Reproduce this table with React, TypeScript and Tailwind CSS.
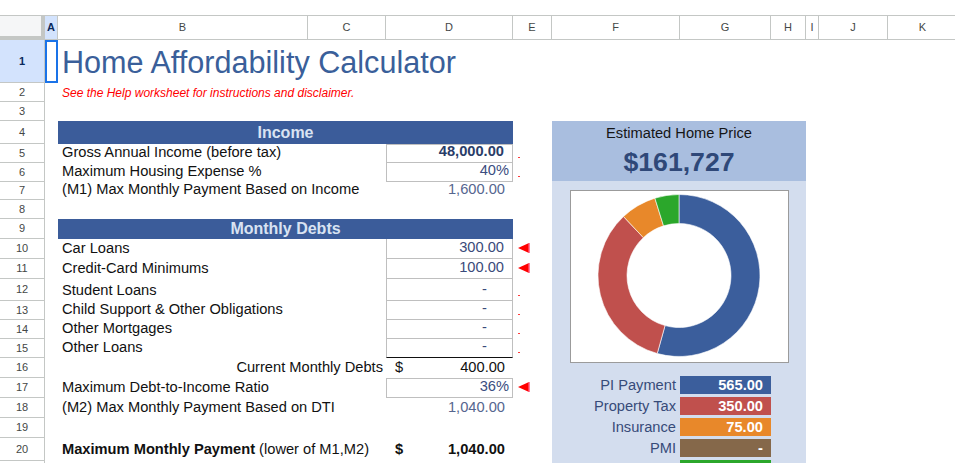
import React from "react";

// Column header cells after the corner: A..K
const COLUMNS = [
  { name: "A", w: "w-[13px]", active: true },
  { name: "B", w: "w-[250px]" },
  { name: "C", w: "w-[78px]" },
  { name: "D", w: "w-[127px]" },
  { name: "E", w: "w-[39px]" },
  { name: "F", w: "w-[128px]" },
  { name: "G", w: "w-[91px]" },
  { name: "H", w: "w-[35px]" },
  { name: "I", w: "w-[13px]" },
  { name: "J", w: "w-[69px]" },
  { name: "K", w: "w-[70px]" },
];

// same heights as grid-rows on the sheet below
const ROW_HEIGHTS = [
  "h-[43px]", "h-[19px]", "h-[19px]", "h-[23px]", "h-[19px]", "h-[19px]", "h-[18px]",
  "h-[19px]", "h-[20px]", "h-[20px]", "h-[20px]", "h-[22px]", "h-[19px]", "h-[19px]",
  "h-[19px]", "h-[20px]", "h-[20px]", "h-[20px]", "h-[20px]", "h-[23px]", "h-[20px]",
];

// the last row (HOA) only peeks in at the bottom edge, so no text is shown for it
const PAYMENT = [
  { label: "PI Payment", value: "565.00", amount: 565, color: "#3b5e9c", bg: "bg-[#3b5e9c]" },
  { label: "Property Tax", value: "350.00", amount: 350, color: "#c0504d", bg: "bg-[#c0504d]" },
  { label: "Insurance", value: "75.00", amount: 75, color: "#e8882a", bg: "bg-[#e8882a]" },
  { label: "PMI", value: "-", amount: 0, color: "#85684a", bg: "bg-[#85684a]" },
  { label: "", value: "", amount: 50, color: "#2ba72b", bg: "bg-[#2ba72b]" },
];

function sector(cx: number, cy: number, r0: number, r1: number, a0: number, a1: number) {
  const pt = (r: number, a: number) => `${cx + r * Math.sin(a)} ${cy - r * Math.cos(a)}`;
  const large = a1 - a0 > Math.PI ? 1 : 0;
  return `M${pt(r1, a0)} A${r1} ${r1} 0 ${large} 1 ${pt(r1, a1)} L${pt(r0, a1)} A${r0} ${r0} 0 ${large} 0 ${pt(r0, a0)} Z`;
}

function Donut() {
  const total = PAYMENT.reduce((s, p) => s + p.amount, 0);
  let start = 0;
  return (
    <svg width="217" height="171" viewBox="0 0 217 171">
      {PAYMENT.filter((p) => p.amount > 0).map((p) => {
        const end = start + (p.amount / total) * Math.PI * 2;
        const d = sector(108, 84.5, 52, 81, start, end);
        start = end;
        return <path key={p.color} d={d} fill={p.color} stroke="#ffffff" strokeWidth="0.6" />;
      })}
    </svg>
  );
}

function Dash() {
  return <span className="block h-[1px] w-[2px] bg-[#ff3b3b]" />;
}

function Marker() {
  return (
    <svg width="12" height="10" viewBox="0 0 12 10">
      <polygon points="0,5 11,0 11,10" fill="#ff0000" />
      <rect x="10.5" y="0" width="1.5" height="10" fill="#ff7aa0" />
    </svg>
  );
}

const label = "flex items-end pb-[3px] pl-[4px] whitespace-nowrap text-[14.67px] leading-none text-[#111]";
const num = "flex items-end justify-end pb-[3px] pr-[8px] text-[14.67px] leading-none";
const money = "flex items-end justify-between pb-[3px] pl-[9px] pr-[8px] text-[14.67px] leading-none text-[#111]";

export default function App() {
  return (
    <div className="h-[463px] w-[955px] overflow-hidden bg-white font-['Liberation_Sans',Arial,sans-serif]">
      <div className="h-[15px]" />

      {/* column headers */}
      <div className="flex h-[25px] text-[11px] text-[#444746]">
        <div className="w-[45px] shrink-0 border-y border-r-[4px] border-b-[4px] border-[#c4c7c5] bg-[#f5f6f7]" />
        {COLUMNS.map((c) => (
          <div
            key={c.name}
            className={`${c.w} flex shrink-0 items-center justify-center border-y border-r border-[#c4c7c5] ${
              c.active ? "bg-[#d3e3fd] font-bold text-[#0b2a5c]" : ""
            }`}
          >
            {c.name}
          </div>
        ))}
      </div>

      <div className="flex">
        {/* row headers */}
        <div className="flex w-[45px] shrink-0 flex-col border-r border-[#c4c7c5] text-[11px] text-[#444746]">
          {ROW_HEIGHTS.map((h, i) => (
            <div
              key={i}
              className={`${h} flex shrink-0 items-center justify-center border-b border-[#c4c7c5] ${
                i === 0 ? "bg-[#d3e3fd] font-bold text-[#0b2a5c]" : ""
              }`}
            >
              {i < 20 ? i + 1 : ""}
            </div>
          ))}
        </div>

        {/* sheet */}
        <div className="grid grid-cols-[13px_250px_78px_127px_39px_128px_91px_35px_13px_69px_70px] grid-rows-[43px_19px_19px_23px_19px_19px_18px_19px_20px_20px_20px_22px_19px_19px_19px_20px_20px_20px_20px_23px_20px]">
          <div className="col-start-1 row-start-1 border-2 border-[#1a73e8]" />
          <div className="col-start-2 col-span-6 row-start-1 whitespace-nowrap pl-[4px] pt-[7px] text-[30.6px] leading-none text-[#3a5f9a]">
            Home Affordability Calculator
          </div>
          <div className="col-start-2 col-span-3 row-start-2 flex items-center whitespace-nowrap pl-[4px] text-[12px] italic leading-none text-[#ff0000]">
            See the Help worksheet for instructions and disclaimer.
          </div>

          {/* Income */}
          <div className="col-start-2 col-span-3 row-start-4 flex items-center justify-center bg-[#3b5c9a] text-[16px] font-bold leading-none text-[#d9e3f2]">
            Income
          </div>
          <div className={`col-start-2 row-start-5 ${label}`}>Gross Annual Income (before tax)</div>
          <div className={`col-start-4 row-start-5 border border-[#bfbfbf] font-bold text-[#2a3d68] ${num}`}>48,000.00</div>
          <div className="col-start-5 row-start-5 flex items-end pb-[5px] pl-[5px]"><Dash /></div>
          <div className={`col-start-2 row-start-6 ${label}`}>Maximum Housing Expense %</div>
          <div className={`col-start-4 row-start-6 border-x border-b border-[#bfbfbf] !pr-[3px] text-[#3a4d80] ${num}`}>40%</div>
          <div className="col-start-5 row-start-6 flex items-end pb-[5px] pl-[5px]"><Dash /></div>
          <div className={`col-start-2 row-start-7 ${label}`}>(M1) Max Monthly Payment Based on Income</div>
          <div className={`col-start-4 row-start-7 text-[#56668f] ${num}`}>1,600.00</div>

          {/* Monthly Debts */}
          <div className="col-start-2 col-span-3 row-start-9 flex items-center justify-center bg-[#3b5c9a] text-[16px] font-bold leading-none text-[#d9e3f2]">
            Monthly Debts
          </div>
          <div className={`col-start-2 row-start-10 ${label}`}>Car Loans</div>
          <div className={`col-start-4 row-start-10 border-x border-b border-[#bfbfbf] text-[#3a4a7a] ${num}`}>300.00</div>
          <div className="col-start-5 row-start-10 pl-[5px] pt-[4px]"><Marker /></div>
          <div className={`col-start-2 row-start-11 ${label}`}>Credit-Card Minimums</div>
          <div className={`col-start-4 row-start-11 border-x border-b border-[#bfbfbf] text-[#3a4a7a] ${num}`}>100.00</div>
          <div className="col-start-5 row-start-11 pl-[5px] pt-[4px]"><Marker /></div>
          <div className={`col-start-2 row-start-12 ${label}`}>Student Loans</div>
          <div className={`col-start-4 row-start-12 border-x border-b border-[#bfbfbf] !pr-[25px] text-[#3a4a7a] ${num}`}>-</div>
          <div className="col-start-5 row-start-12 flex items-end pb-[5px] pl-[5px]"><Dash /></div>
          <div className={`col-start-2 row-start-13 ${label}`}>Child Support &amp; Other Obligations</div>
          <div className={`col-start-4 row-start-13 border-x border-b border-[#bfbfbf] !pr-[25px] text-[#3a4a7a] ${num}`}>-</div>
          <div className="col-start-5 row-start-13 flex items-end pb-[5px] pl-[5px]"><Dash /></div>
          <div className={`col-start-2 row-start-14 ${label}`}>Other Mortgages</div>
          <div className={`col-start-4 row-start-14 border-x border-b border-[#bfbfbf] !pr-[25px] text-[#3a4a7a] ${num}`}>-</div>
          <div className="col-start-5 row-start-14 flex items-end pb-[5px] pl-[5px]"><Dash /></div>
          <div className={`col-start-2 row-start-15 ${label}`}>Other Loans</div>
          <div className={`col-start-4 row-start-15 border-x border-b border-x-[#bfbfbf] border-b-[#111] !pr-[25px] text-[#3a4a7a] ${num}`}>-</div>
          <div className="col-start-5 row-start-15 flex items-end pb-[5px] pl-[5px]"><Dash /></div>

          <div className="col-start-2 col-span-2 row-start-16 flex items-end justify-end whitespace-nowrap pb-[3px] pr-[3px] text-[14.67px] leading-none text-[#111]">
            Current Monthly Debts
          </div>
          <div className={`col-start-4 row-start-16 ${money}`}>
            <span>$</span>
            <span>400.00</span>
          </div>
          <div className={`col-start-2 row-start-17 ${label}`}>Maximum Debt-to-Income Ratio</div>
          <div className={`col-start-4 row-start-17 border border-[#bfbfbf] !pr-[3px] text-[#3a4d80] ${num}`}>36%</div>
          <div className="col-start-5 row-start-17 pl-[5px] pt-[4px]"><Marker /></div>
          <div className={`col-start-2 row-start-18 ${label}`}>(M2) Max Monthly Payment Based on DTI</div>
          <div className={`col-start-4 row-start-18 text-[#56668f] ${num}`}>1,040.00</div>

          <div className={`col-start-2 row-start-20 !pb-[4px] ${label}`}>
            <span className="font-bold">Maximum Monthly Payment</span>
            <span>&nbsp;(lower of M1,M2)</span>
          </div>
          <div className={`col-start-4 row-start-20 !pb-[4px] font-bold ${money}`}>
            <span>$</span>
            <span>1,040.00</span>
          </div>

          {/* estimate panel */}
          <div className="col-start-6 col-span-3 row-start-4 row-span-18 flex flex-col bg-[#d3ddee]">
            <div className="flex h-[60px] shrink-0 flex-col items-center bg-[#a9bedf] pt-[5px]">
              <div className="text-[14.67px] leading-none text-[#151515]">Estimated Home Price</div>
              <div className="mt-[8px] text-[26.67px] font-bold leading-none text-[#2f4878]">$161,727</div>
            </div>
            <div className="ml-[18px] mt-[9px] h-[173px] w-[219px] shrink-0 border border-[#9b9b9b] bg-white">
              <Donut />
            </div>
            <div className="mt-[13px] flex flex-col gap-[3px]">
              {PAYMENT.map((p) => (
                <div key={p.color} className="flex h-[18px] shrink-0 items-center">
                  <div className="w-[128px] whitespace-nowrap pr-[4px] text-right text-[14.67px] leading-none text-[#374b79]">
                    {p.label}
                  </div>
                  <div className={`${p.bg} flex h-[18px] w-[91px] items-center justify-end pr-[8px] text-[14.67px] font-bold leading-none text-white`}>
                    {p.value}
                  </div>
                </div>
              ))}
            </div>
          </div>
        </div>
      </div>
    </div>
  );
}
